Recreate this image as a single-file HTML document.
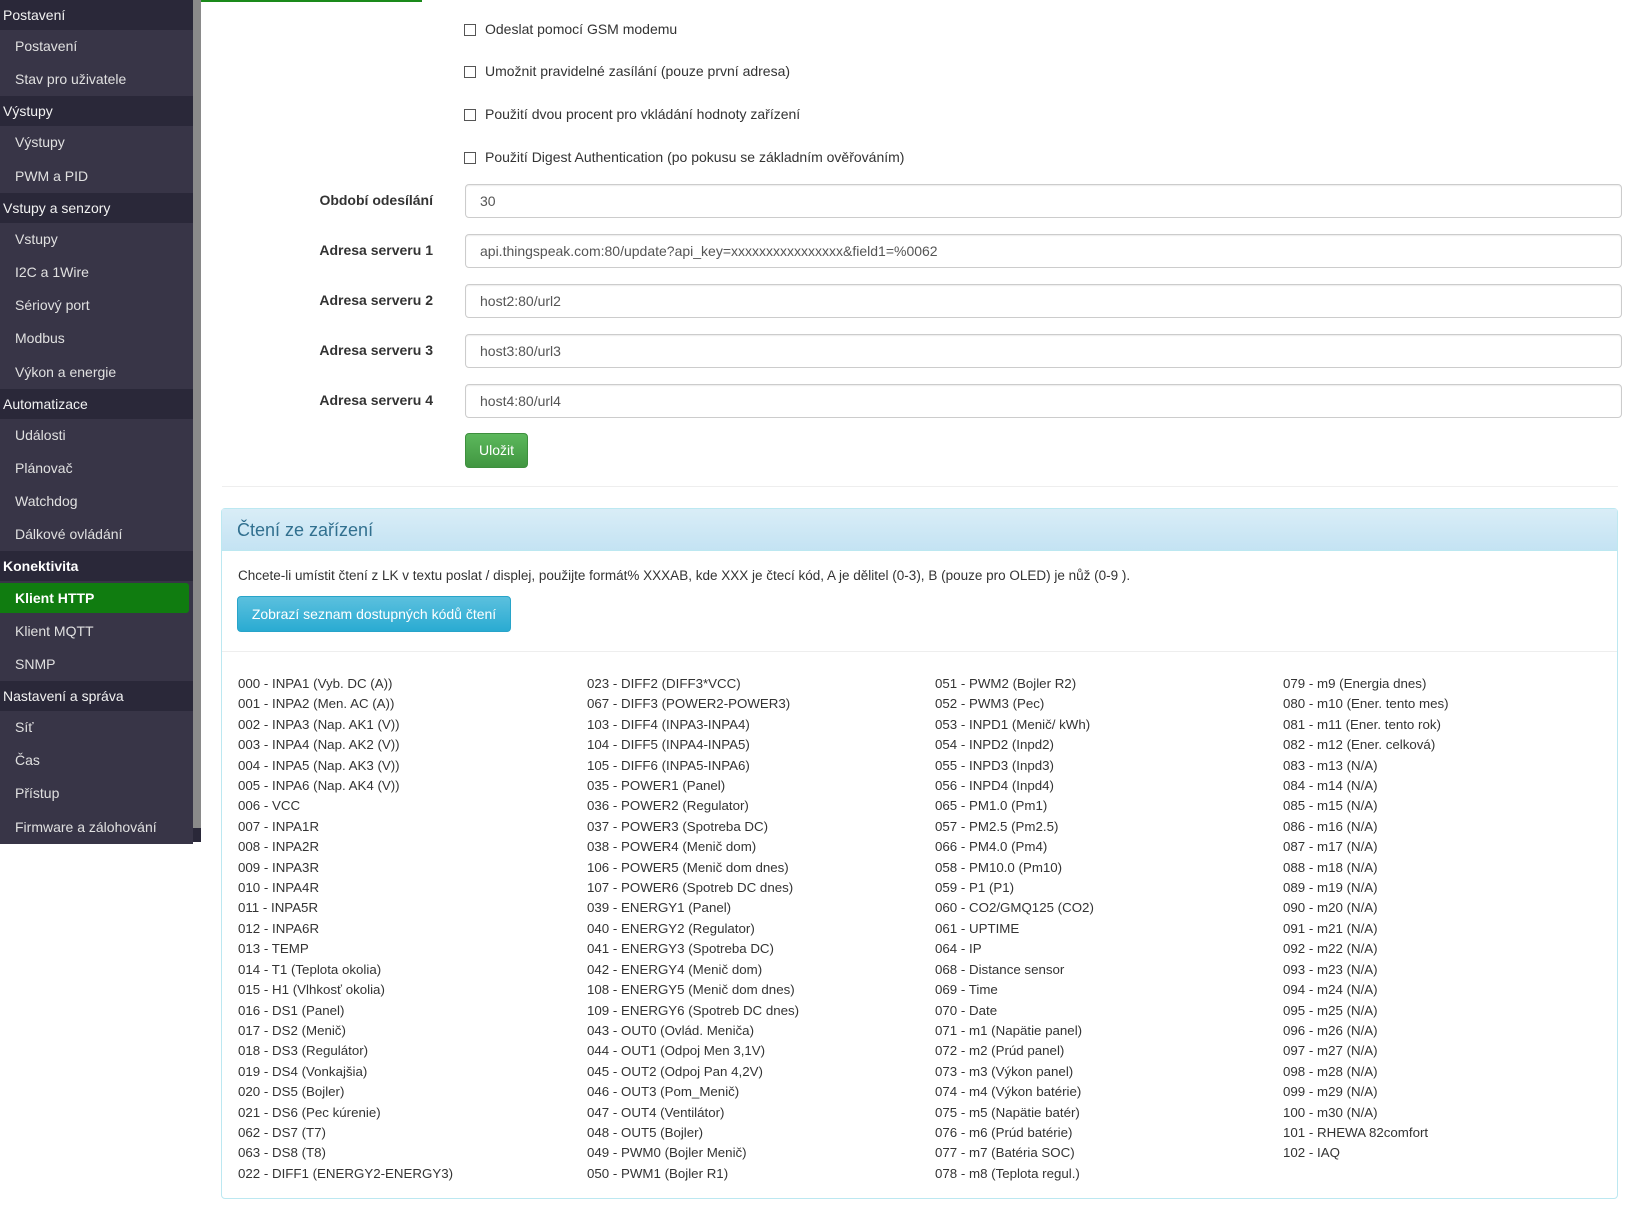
<!DOCTYPE html>
<html><head><meta charset="utf-8"><style>
*{box-sizing:border-box;margin:0;padding:0}
body{width:1644px;height:1214px;background:#fff;font-family:"Segoe UI","Liberation Sans",sans-serif;font-size:14px;color:#333;position:relative;overflow:hidden}
#side{position:absolute;left:0;top:0;width:201px;height:842px;background:#2a2839}
#side .r{height:33.2px;line-height:33.2px;background:#383547;color:#e0e0e0;padding-left:15px;width:193px;font-size:14px}
#side .h{height:30px;line-height:30px;background:#2a2839;color:#f2f2f2;padding-left:3px;width:193px}
#side .b{font-weight:bold;color:#fff}
#side .act{background:#383547;position:relative}
#side .act span{position:absolute;left:0;top:2px;width:189px;height:30px;line-height:30px;background:#107c10;border-radius:0 3px 3px 0;color:#fff;font-weight:bold;padding-left:15px}
#sb{position:absolute;left:193px;top:0;width:8px;height:828px;background:#8a8a8a}
#gbar{position:absolute;left:180px;top:0;width:242px;height:2px;background:#1a8a1a}
.cb{position:absolute;left:464px;width:12px;height:12px;border:1px solid #555;background:#fff}
.cl{position:absolute;left:485px;font-size:14px;color:#333}
.lab{position:absolute;right:1211px;font-weight:bold;font-size:14px;color:#333;text-align:right;white-space:nowrap}
.inp{position:absolute;left:465px;width:1157px;height:34px;border:1px solid #ccc;border-radius:4px;padding-left:14px;line-height:32px;font-size:14px;color:#555;box-shadow:inset 0 1px 1px rgba(0,0,0,.075)}
#save{position:absolute;left:465px;top:433px;width:63px;height:35px;background:linear-gradient(#5cb85c,#419641);border:1px solid #3e8f3e;border-radius:4px;color:#fff;text-align:center;line-height:33px}
#hr1{position:absolute;left:222px;top:486px;width:1396px;height:1px;background:#eee}
#panel{position:absolute;left:221px;top:508px;width:1397px;height:691px;border:1px solid #bce8f1;border-radius:4px}
#ph{height:42px;background:linear-gradient(#d9edf7,#c4e3f3);border-bottom:1px solid #bce8f1;color:#31708f;font-size:18px;line-height:42px;padding-left:15px}
#ptext{position:absolute;left:16px;top:59px;font-size:13.5px;color:#333;white-space:nowrap}
#pbtn{position:absolute;left:15px;top:87px;width:274px;height:36px;background:linear-gradient(#5bc0de,#2aabd2);border:1px solid #28a4c9;border-radius:4px;color:#fff;line-height:34px;text-align:center;font-size:14px}
#hr2{position:absolute;left:0;top:142px;width:1395px;height:1px;background:#eee}
.col{position:absolute;top:165px;font-size:13.3px;line-height:20.4px;white-space:nowrap;color:#333}
</style></head><body>
<div id="gbar"></div>
<div id="side">
<div class="h">Postavení</div>
<div class="r">Postavení</div>
<div class="r">Stav pro uživatele</div>
<div class="h">Výstupy</div>
<div class="r">Výstupy</div>
<div class="r">PWM a PID</div>
<div class="h">Vstupy a senzory</div>
<div class="r">Vstupy</div>
<div class="r">I2C a 1Wire</div>
<div class="r">Sériový port</div>
<div class="r">Modbus</div>
<div class="r">Výkon a energie</div>
<div class="h">Automatizace</div>
<div class="r">Události</div>
<div class="r">Plánovač</div>
<div class="r">Watchdog</div>
<div class="r">Dálkové ovládání</div>
<div class="h b">Konektivita</div>
<div class="r act"><span>Klient HTTP</span></div>
<div class="r">Klient MQTT</div>
<div class="r">SNMP</div>
<div class="h">Nastavení a správa</div>
<div class="r">Síť</div>
<div class="r">Čas</div>
<div class="r">Přístup</div>
<div class="r">Firmware a zálohování</div>
</div>
<div id="sb"></div>

<div class="cb" style="top:24px"></div><div class="cl" style="top:21px">Odeslat pomocí GSM modemu</div>
<div class="cb" style="top:66px"></div><div class="cl" style="top:63px">Umožnit pravidelné zasílání (pouze první adresa)</div>
<div class="cb" style="top:109px"></div><div class="cl" style="top:106px">Použití dvou procent pro vkládání hodnoty zařízení</div>
<div class="cb" style="top:152px"></div><div class="cl" style="top:149px">Použití Digest Authentication (po pokusu se základním ověřováním)</div>

<div class="lab" style="top:192px">Období odesílání</div><div class="inp" style="top:184px">30</div>
<div class="lab" style="top:242px">Adresa serveru 1</div><div class="inp" style="top:234px">api.thingspeak.com:80/update?api_key=xxxxxxxxxxxxxxxx&amp;field1=%0062</div>
<div class="lab" style="top:292px">Adresa serveru 2</div><div class="inp" style="top:284px">host2:80/url2</div>
<div class="lab" style="top:342px">Adresa serveru 3</div><div class="inp" style="top:334px">host3:80/url3</div>
<div class="lab" style="top:392px">Adresa serveru 4</div><div class="inp" style="top:384px">host4:80/url4</div>
<div id="save">Uložit</div>
<div id="hr1"></div>

<div id="panel">
<div id="ph">Čtení ze zařízení</div>
<div id="ptext">Chcete-li umístit čtení z LK v textu poslat / displej, použijte formát% XXXAB, kde XXX je čtecí kód, A je dělitel (0-3), B (pouze pro OLED) je nůž (0-9 ).</div>
<div id="pbtn">Zobrazí seznam dostupných kódů čtení</div>
<div id="hr2"></div>
<div class="col" style="left:16px">000 - INPA1 (Vyb. DC (A))<br>001 - INPA2 (Men. AC (A))<br>002 - INPA3 (Nap. AK1 (V))<br>003 - INPA4 (Nap. AK2 (V))<br>004 - INPA5 (Nap. AK3 (V))<br>005 - INPA6 (Nap. AK4 (V))<br>006 - VCC<br>007 - INPA1R<br>008 - INPA2R<br>009 - INPA3R<br>010 - INPA4R<br>011 - INPA5R<br>012 - INPA6R<br>013 - TEMP<br>014 - T1 (Teplota okolia)<br>015 - H1 (Vlhkosť okolia)<br>016 - DS1 (Panel)<br>017 - DS2 (Menič)<br>018 - DS3 (Regulátor)<br>019 - DS4 (Vonkajšia)<br>020 - DS5 (Bojler)<br>021 - DS6 (Pec kúrenie)<br>062 - DS7 (T7)<br>063 - DS8 (T8)<br>022 - DIFF1 (ENERGY2-ENERGY3)</div>
<div class="col" style="left:365px">023 - DIFF2 (DIFF3*VCC)<br>067 - DIFF3 (POWER2-POWER3)<br>103 - DIFF4 (INPA3-INPA4)<br>104 - DIFF5 (INPA4-INPA5)<br>105 - DIFF6 (INPA5-INPA6)<br>035 - POWER1 (Panel)<br>036 - POWER2 (Regulator)<br>037 - POWER3 (Spotreba DC)<br>038 - POWER4 (Menič dom)<br>106 - POWER5 (Menič dom dnes)<br>107 - POWER6 (Spotreb DC dnes)<br>039 - ENERGY1 (Panel)<br>040 - ENERGY2 (Regulator)<br>041 - ENERGY3 (Spotreba DC)<br>042 - ENERGY4 (Menič dom)<br>108 - ENERGY5 (Menič dom dnes)<br>109 - ENERGY6 (Spotreb DC dnes)<br>043 - OUT0 (Ovlád. Meniča)<br>044 - OUT1 (Odpoj Men 3,1V)<br>045 - OUT2 (Odpoj Pan 4,2V)<br>046 - OUT3 (Pom_Menič)<br>047 - OUT4 (Ventilátor)<br>048 - OUT5 (Bojler)<br>049 - PWM0 (Bojler Menič)<br>050 - PWM1 (Bojler R1)</div>
<div class="col" style="left:713px">051 - PWM2 (Bojler R2)<br>052 - PWM3 (Pec)<br>053 - INPD1 (Menič/ kWh)<br>054 - INPD2 (Inpd2)<br>055 - INPD3 (Inpd3)<br>056 - INPD4 (Inpd4)<br>065 - PM1.0 (Pm1)<br>057 - PM2.5 (Pm2.5)<br>066 - PM4.0 (Pm4)<br>058 - PM10.0 (Pm10)<br>059 - P1 (P1)<br>060 - CO2/GMQ125 (CO2)<br>061 - UPTIME<br>064 - IP<br>068 - Distance sensor<br>069 - Time<br>070 - Date<br>071 - m1 (Napätie panel)<br>072 - m2 (Prúd panel)<br>073 - m3 (Výkon panel)<br>074 - m4 (Výkon batérie)<br>075 - m5 (Napätie batér)<br>076 - m6 (Prúd batérie)<br>077 - m7 (Batéria SOC)<br>078 - m8 (Teplota regul.)</div>
<div class="col" style="left:1061px">079 - m9 (Energia dnes)<br>080 - m10 (Ener. tento mes)<br>081 - m11 (Ener. tento rok)<br>082 - m12 (Ener. celková)<br>083 - m13 (N/A)<br>084 - m14 (N/A)<br>085 - m15 (N/A)<br>086 - m16 (N/A)<br>087 - m17 (N/A)<br>088 - m18 (N/A)<br>089 - m19 (N/A)<br>090 - m20 (N/A)<br>091 - m21 (N/A)<br>092 - m22 (N/A)<br>093 - m23 (N/A)<br>094 - m24 (N/A)<br>095 - m25 (N/A)<br>096 - m26 (N/A)<br>097 - m27 (N/A)<br>098 - m28 (N/A)<br>099 - m29 (N/A)<br>100 - m30 (N/A)<br>101 - RHEWA 82comfort<br>102 - IAQ</div>
</div>
</body></html>
